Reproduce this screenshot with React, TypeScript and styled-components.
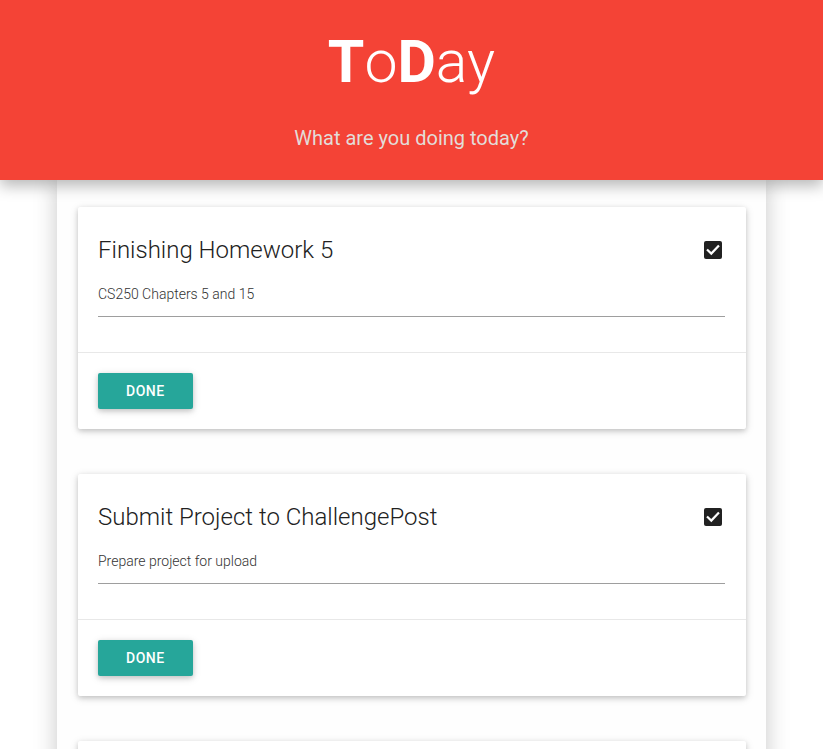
import React from "react";
import styled, { createGlobalStyle } from "styled-components";

const Global = createGlobalStyle`
  html, body { margin: 0; padding: 0; background: #ffffff; }
  body { font-family: Roboto, "Noto Sans", sans-serif; overflow: hidden; }
  * { box-sizing: border-box; }
`;

const Header = styled.header`
  position: relative;
  z-index: 2;
  height: 180px;
  background: #f44336;
  box-shadow: 0 6px 14px rgba(0, 0, 0, 0.28);
  display: flex;
  flex-direction: column;
  align-items: center;
`;

const Title = styled.h1`
  margin: 28px 0 0;
  font-size: 59px;
  line-height: 68px;
  font-weight: 300;
  color: #ffffff;
  letter-spacing: 0;
`;

const Strong = styled.span`
  font-weight: 700;
`;

const Tagline = styled.p`
  margin: 30px 0 0;
  font-size: 20px;
  line-height: 24px;
  font-weight: 400;
  color: #e3dcd8;
`;

const Container = styled.main`
  position: relative;
  z-index: 1;
  width: 709px;
  margin: 0 auto;
  background: #fefefe;
  padding: 27px 20px 40px 21px;
  min-height: 600px;
  box-shadow: 0 0 22px rgba(0, 0, 0, 0.22);
  display: flex;
  flex-direction: column;
  gap: 45px;
`;

const Card = styled.section<{ $placeholder?: boolean }>`
  background: #fff;
  border-radius: 2px;
  min-height: ${(p) => (p.$placeholder ? "222px" : "0")};
  box-shadow: 0 2px 5px rgba(0, 0, 0, 0.16), 0 2px 10px rgba(0, 0, 0, 0.12);
`;

const CardContent = styled.div`
  padding: 25px 21px 35px 20px;
`;

const TitleRow = styled.div`
  display: flex;
  align-items: center;
  justify-content: space-between;
  height: 36px;
`;

const CardTitle = styled.h2`
  margin: 0;
  font-size: 24px;
  line-height: 36px;
  font-weight: 300;
  color: #212121;
`;

const Check = styled.span`
  display: flex;
  width: 18px;
  height: 18px;
  margin-right: 3px;
`;

const Detail = styled.div`
  margin-top: 16px;
  padding-bottom: 12px;
  border-bottom: 1px solid #9e9e9e;
  font-size: 14px;
  line-height: 20px;
  font-weight: 300;
  color: #333333;
`;

const CardAction = styled.div`
  border-top: 1px solid #e8e8e8;
  padding: 20px;
`;

const Button = styled.button`
  height: 36px;
  padding: 0 28px;
  border: none;
  border-radius: 2px;
  background: #26a69a;
  color: #fff;
  font-family: Roboto, sans-serif;
  font-size: 14px;
  font-weight: 500;
  letter-spacing: 0.5px;
  text-transform: uppercase;
  box-shadow: 0 2px 5px rgba(0, 0, 0, 0.16), 0 2px 10px rgba(0, 0, 0, 0.12);
  cursor: pointer;
`;

const CheckIcon = () => (
  <svg width="18" height="18" viewBox="0 0 18 18">
    <rect x="0" y="0" width="18" height="18" rx="2" fill="#212121" />
    <path d="M3.8 9.2 L7.3 12.6 L14.2 5.4" fill="none" stroke="#fff" strokeWidth="2.2" strokeLinecap="square" />
  </svg>
);

const tasks = [
  { title: "Finishing Homework 5", detail: "CS250 Chapters 5 and 15" },
  { title: "Submit Project to ChallengePost", detail: "Prepare project for upload" },
];

export default function App() {
  return (
    <>
      <Global />
      <Header>
        <Title>
          <Strong>T</Strong>o<Strong>D</Strong>ay
        </Title>
        <Tagline>What are you doing today?</Tagline>
      </Header>
      <Container>
        {tasks.map((t, i) => (
          <Card key={i}>
            <CardContent>
              <TitleRow>
                <CardTitle>{t.title}</CardTitle>
                <Check>
                  <CheckIcon />
                </Check>
              </TitleRow>
              <Detail>{t.detail}</Detail>
            </CardContent>
            <CardAction>
              <Button>Done</Button>
            </CardAction>
          </Card>
        ))}
        <Card $placeholder />
      </Container>
    </>
  );
}
